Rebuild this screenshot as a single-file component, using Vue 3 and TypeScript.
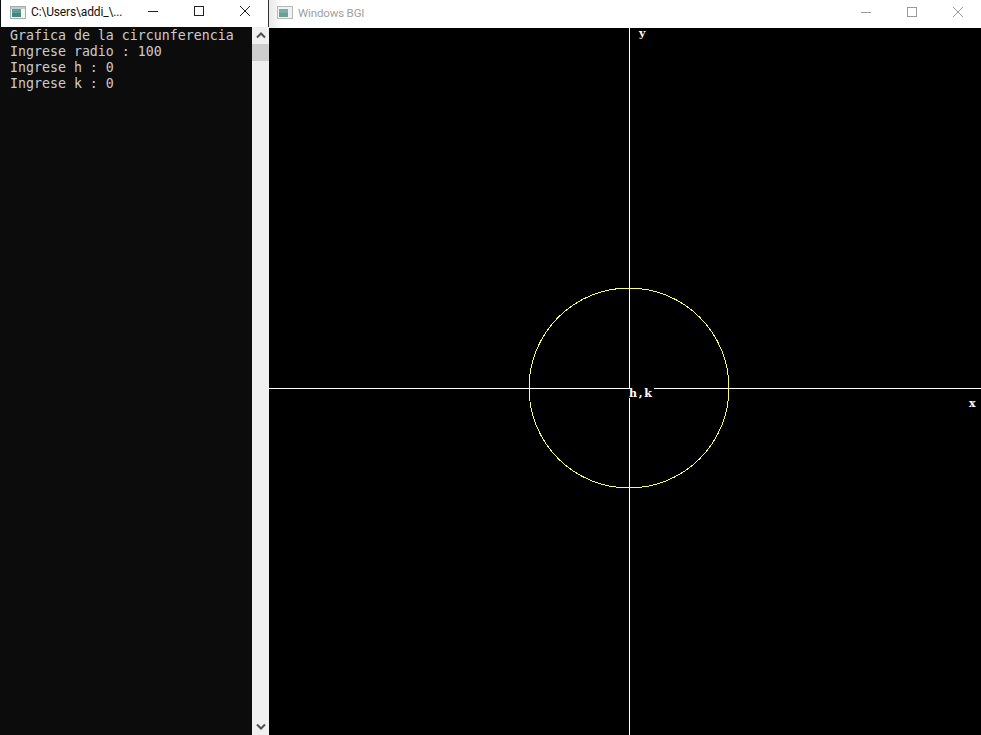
<script setup lang="ts">
const consoleLines: string[] = [
  'Grafica de la circunferencia',
  'Ingrese radio : 100',
  'Ingrese h : 0',
  'Ingrese k : 0',
]
</script>

<template>
  <div class="desktop">
    <section class="console">
      <header class="titlebar console-title">
        <svg class="app-icon" width="16" height="13" viewBox="0 0 16 13">
          <rect x="0.5" y="0.5" width="15" height="12" fill="#f4f6f6" stroke="#a9adad" />
          <rect x="1" y="1" width="14" height="2" fill="#c4c9c9" />
          <rect x="2" y="3" width="9" height="8" fill="#5f9a9c" />
          <rect x="2" y="7" width="9" height="4" fill="#3f8a78" />
        </svg>
        <span class="title-text">C:\Users\addi_\...</span>
        <div class="controls">
          <span class="control">
            <svg width="12" height="12" viewBox="0 0 12 12"><path d="M1 6.5h10" stroke="#222" fill="none" /></svg>
          </span>
          <span class="control">
            <svg width="12" height="12" viewBox="0 0 12 12"><rect x="1.5" y="1.5" width="9" height="9" stroke="#222" fill="none" /></svg>
          </span>
          <span class="control">
            <svg width="12" height="12" viewBox="0 0 12 12"><path d="M1 1l10 10M11 1L1 11" stroke="#222" fill="none" /></svg>
          </span>
        </div>
      </header>
      <div class="console-body">
        <pre class="output"><template v-for="line in consoleLines" :key="line">{{ line }}
</template></pre>
        <div class="scrollbar">
          <span class="arrow">
            <svg width="10" height="7" viewBox="0 0 10 7"><path d="M1 5.5l4-4 4 4" stroke="#505050" stroke-width="2" fill="none" /></svg>
          </span>
          <span class="thumb"></span>
          <span class="track"></span>
          <span class="arrow">
            <svg width="10" height="7" viewBox="0 0 10 7"><path d="M1 1.5l4 4 4-4" stroke="#505050" stroke-width="2" fill="none" /></svg>
          </span>
        </div>
      </div>
    </section>

    <section class="bgi">
      <header class="titlebar bgi-title">
        <svg class="app-icon" width="16" height="13" viewBox="0 0 16 13">
          <rect x="0.5" y="0.5" width="15" height="12" fill="#f0f2f2" stroke="#b4b8b8" />
          <rect x="2" y="3" width="9" height="8" fill="#7fa9ab" />
          <rect x="2" y="7" width="9" height="4" fill="#6b9f92" />
        </svg>
        <span class="title-text dim">Windows BGI</span>
        <div class="controls">
          <span class="control">
            <svg width="12" height="12" viewBox="0 0 12 12"><path d="M1 6.5h10" stroke="#999" fill="none" /></svg>
          </span>
          <span class="control">
            <svg width="12" height="12" viewBox="0 0 12 12"><rect x="1.5" y="1.5" width="9" height="9" stroke="#999" fill="none" /></svg>
          </span>
          <span class="control">
            <svg width="12" height="12" viewBox="0 0 12 12"><path d="M1 1l10 10M11 1L1 11" stroke="#999" fill="none" /></svg>
          </span>
        </div>
      </header>
      <svg class="canvas" width="712" height="707" viewBox="0 0 712 707">
        <line class="axis" x1="360.5" y1="0" x2="360.5" y2="707" />
        <line class="axis" x1="0" y1="360.5" x2="712" y2="360.5" />
        <circle class="curve" cx="360" cy="360" r="100" />
        <rect x="360" y="361" width="25" height="9" fill="#000" />
        <rect x="361" y="360" width="24" height="1" fill="#000" />
        <text class="label" x="360" y="369">h,k</text>
        <text class="label" x="370" y="9">y</text>
        <text class="label" x="700" y="379">x</text>
      </svg>
    </section>
  </div>
</template>

<style scoped>
.desktop {
  display: flex;
  width: 981px;
  height: 735px;
  overflow: hidden;
  background: #000;
}
.console {
  display: flex;
  flex-direction: column;
  width: 269px;
  flex: none;
  background: #0c0c0c;
}
.titlebar {
  display: flex;
  align-items: center;
  height: 28px;
  padding-bottom: 3px;
  box-sizing: border-box;
  flex: none;
  background: #fff;
  font-family: Roboto, "Noto Sans", sans-serif;
  font-size: 12px;
}
.console-title {
  margin-left: 1px;
  padding-left: 9px;
  border-right: 1px solid #333;
  height: 27px;
}
.app-icon {
  flex: none;
}
.title-text {
  margin-left: 5px;
  color: #111;
  white-space: nowrap;
  letter-spacing: -0.15px;
}
.dim {
  color: #a0a0a0;
  font-size: 11.5px;
}
.controls {
  display: flex;
  margin-left: auto;
  height: 100%;
}
.control {
  display: flex;
  align-items: center;
  justify-content: center;
  width: 46px;
  padding-bottom: 2px;
  box-sizing: border-box;
}
.console-body {
  display: flex;
  flex: 1;
  min-height: 0;
}
.output {
  flex: 1;
  margin: 0;
  padding: 1px 0 0 10px;
  font-family: "DejaVu Sans Mono", "Liberation Mono", monospace;
  font-size: 13.28px;
  line-height: 16px;
  color: #cccccc;
}
.scrollbar {
  display: flex;
  flex-direction: column;
  width: 17px;
  flex: none;
  background: #f0f0f0;
}
.arrow {
  display: flex;
  align-items: center;
  justify-content: center;
  height: 17px;
  flex: none;
}
.thumb {
  height: 17px;
  flex: none;
  background: #cdcdcd;
}
.track {
  flex: 1;
}
.bgi {
  display: flex;
  flex-direction: column;
  flex: 1;
  min-width: 0;
}
.bgi-title {
  padding-left: 8px;
  background: linear-gradient(90deg, #e8e8e8 0, #ffffff 14px);
}
.canvas {
  display: block;
  flex: none;
  background: #000;
}
.axis {
  stroke: #fff;
  stroke-width: 1;
  shape-rendering: crispEdges;
}
.curve {
  fill: none;
  stroke: #ffff55;
  stroke-width: 1;
  shape-rendering: crispEdges;
}
.label {
  fill: #fff;
  font-family: "DejaVu Serif", "Liberation Serif", serif;
  font-size: 11px;
  font-weight: 700;
  letter-spacing: 1.7px;
}
</style>
